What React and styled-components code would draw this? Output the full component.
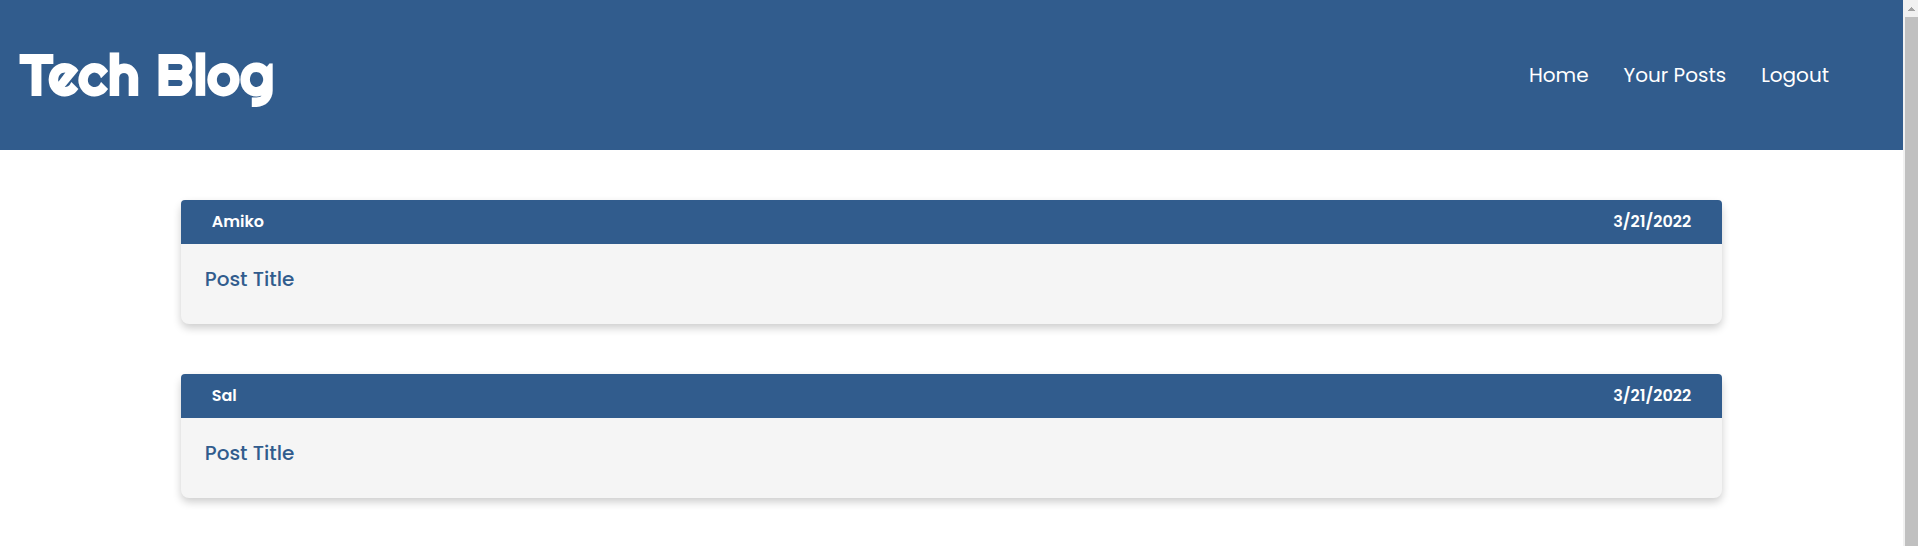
import React from "react";
import styled, { createGlobalStyle } from "styled-components";

const blue = "#315c8d";

const GlobalStyle = createGlobalStyle`
  * { box-sizing: border-box; }
  body {
    margin: 0;
    background: #ffffff;
    font-family: Poppins, Inter, "Liberation Sans", sans-serif;
  }
`;

const Shell = styled.div`
  display: flex;
  height: 100vh;
  overflow: hidden;
`;

const Page = styled.div`
  flex: 1;
  min-width: 0;
`;

const Header = styled.header`
  display: flex;
  align-items: center;
  justify-content: space-between;
  min-height: 150px;
  padding: 0 74px 0 20px;
  background: ${blue};
  color: #ffffff;
`;

const Brand = styled.h1`
  margin: 0;
  font-family: Righteous, "Fredoka One", Poppins, Inter, sans-serif;
  font-size: 57px;
  line-height: 70px;
  font-weight: 700;
`;

const Nav = styled.nav`
  display: flex;
  gap: 35px;
`;

const NavLink = styled.a`
  color: #ffffff;
  font-size: 20px;
  line-height: 30px;
  text-decoration: none;
`;

const Posts = styled.main`
  display: flex;
  flex-direction: column;
  gap: 50px;
  width: 81%;
  margin: 50px auto;
`;

const Card = styled.article`
  border-radius: 8px;
  background: #f5f5f5;
  box-shadow: 0 4px 8px rgba(0, 0, 0, 0.2);
`;

const CardHeader = styled.div`
  display: flex;
  align-items: center;
  justify-content: space-between;
  padding: 10px 31px;
  border-radius: 4px 4px 0 0;
  background: ${blue};
  color: #ffffff;
  font-size: 16px;
  line-height: 24px;
  font-weight: 600;
`;

const CardBody = styled.div`
  padding: 20px 24px 30px;
`;

const PostLink = styled.a`
  display: block;
  color: ${blue};
  font-size: 20px;
  line-height: 30px;
  font-weight: 500;
  text-decoration: none;
`;

const ScrollTrack = styled.div`
  display: flex;
  flex-direction: column;
  width: 15px;
  padding-left: 2px;
  background: #f1f1f1;
`;

const ScrollArrow = styled.div`
  display: flex;
  align-items: center;
  justify-content: center;
  height: 17px;
`;

const ScrollThumb = styled.div`
  flex: 1;
  background: #c0c0c0;
`;

const links = ["Home", "Your Posts", "Logout"];

const posts = [
  { id: 1, author: "Amiko", date: "3/21/2022", title: "Post Title" },
  { id: 2, author: "Sal", date: "3/21/2022", title: "Post Title" },
];

export default function App() {
  return (
    <>
      <GlobalStyle />
      <Shell>
        <Page>
          <Header>
            <Brand>Tech Blog</Brand>
            <Nav>
              {links.map((label) => (
                <NavLink key={label} href="#">{label}</NavLink>
              ))}
            </Nav>
          </Header>
          <Posts>
            {posts.map((post) => (
              <Card key={post.id}>
                <CardHeader>
                  <span>{post.author}</span>
                  <time>{post.date}</time>
                </CardHeader>
                <CardBody>
                  <PostLink href="#">{post.title}</PostLink>
                </CardBody>
              </Card>
            ))}
          </Posts>
        </Page>
        <ScrollTrack aria-hidden="true">
          <ScrollArrow>
            <svg width="7" height="4" viewBox="0 0 7 4" shapeRendering="crispEdges">
              <path d="M3 0h1v1h1v1h1v1h1v1H0V3h1V2h1V1h1z" fill="#a3a3a3" />
            </svg>
          </ScrollArrow>
          <ScrollThumb />
        </ScrollTrack>
      </Shell>
    </>
  );
}
